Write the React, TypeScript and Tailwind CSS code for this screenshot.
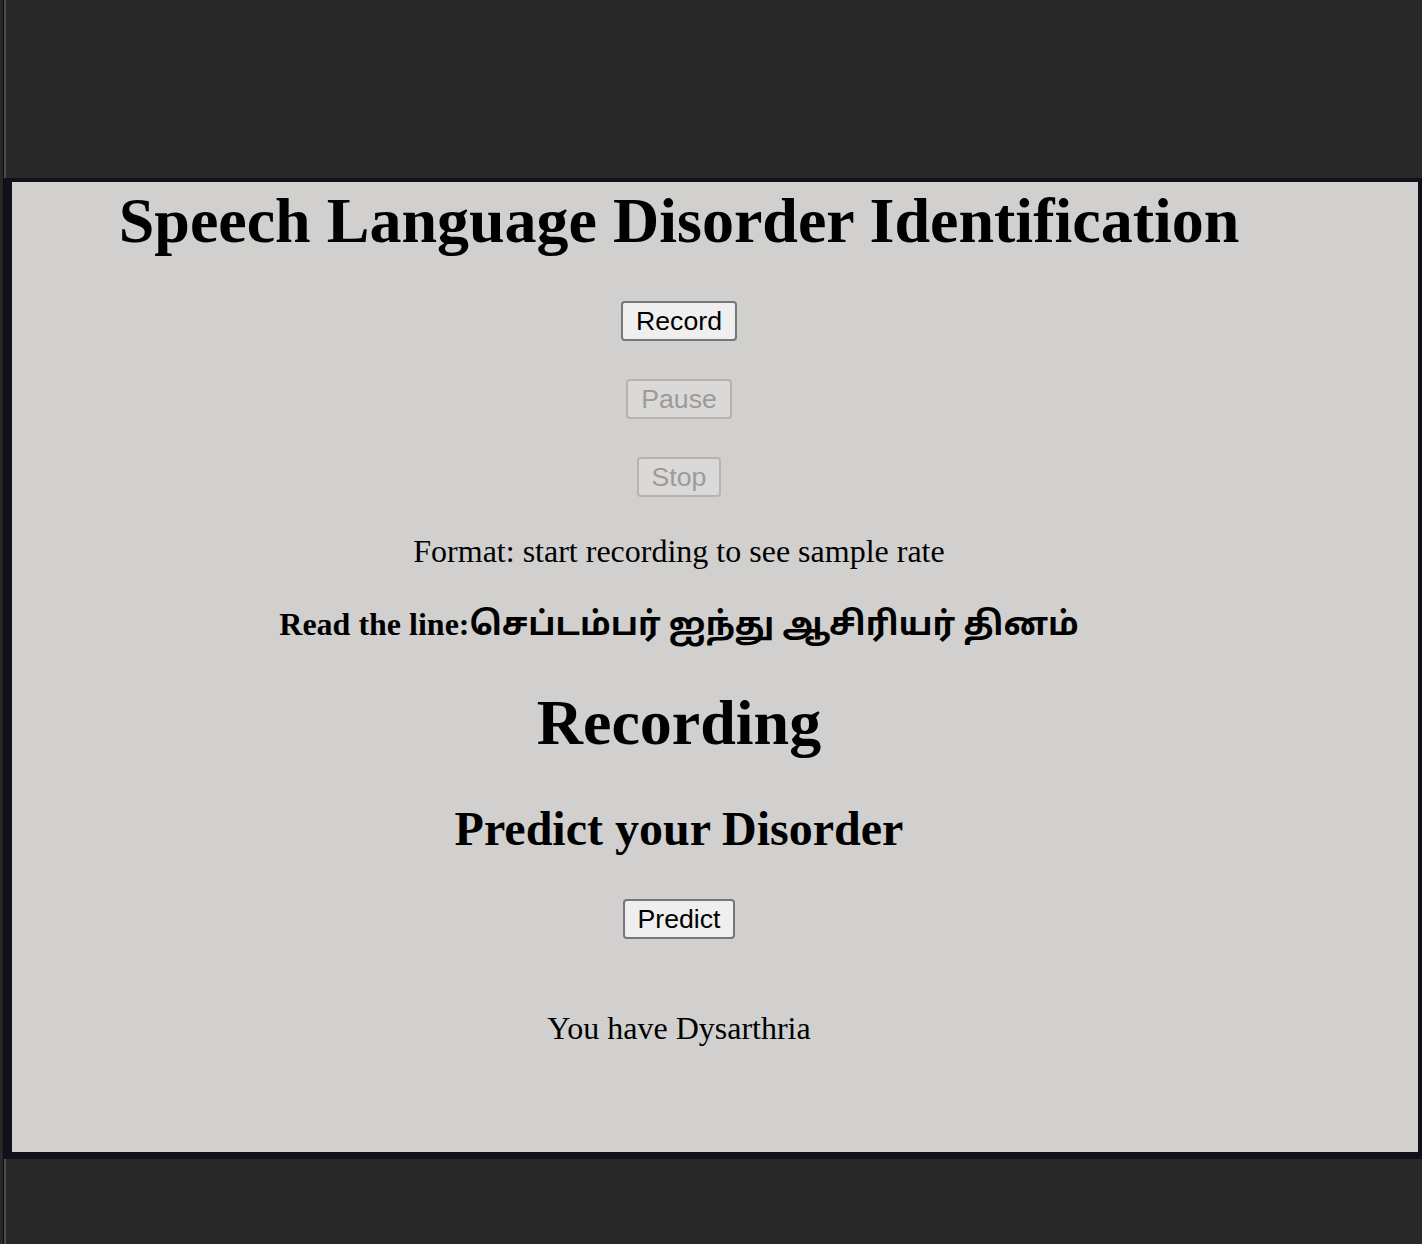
const serif = "font-['Liberation_Serif','Noto_Sans_Tamil','Noto_Sans',serif]";

const RecButton = ({ label, disabled = false }: { label: string; disabled?: boolean }) => (
  <button
    disabled={disabled}
    className={
      "h-[40px] px-[13px] rounded-[4px] border-2 text-[26.67px] leading-none font-['Liberation_Sans',Arial,sans-serif] " +
      (disabled
        ? "bg-[#dad9d7] border-[#b5b4b2] text-[#9c9b9a]"
        : "bg-[#efefef] border-[#767676] text-black")
    }
  >
    {label}
  </button>
);

const App = () => {
  return (
    <div className="flex min-h-[1244px] bg-[#282828]">
      <div className="w-[4px] shrink-0 border-r border-[#0b0b0b]" />
      <div className="flex-1 border-l-2 border-[#4d4d4d] pt-[178px]">
        <div className="-ml-[2px] h-[981px] border-l-[8px] border-t-[4px] border-r-[4px] border-b-[7px] border-[#0f121a] bg-[#d1d0ce]">
          <div className={"w-[1334px] flex flex-col items-center text-center text-black " + serif}>
            <h1 className="mt-[2px] text-[64px] leading-[74px] font-bold">
              Speech Language Disorder Identification
            </h1>

            <div className="mt-[43px] flex flex-col items-center gap-[38px]">
              <RecButton label="Record" />
              <RecButton label="Pause" disabled />
              <RecButton label="Stop" disabled />
            </div>

            <p className="mt-[36px] text-[32px] leading-[37px]">
              Format: start recording to see sample rate
            </p>

            <h4 className="mt-[36px] text-[32px] leading-[37px] font-bold">
              Read the line:<span className="text-[32.8px]">செப்டம்பர் ஐந்து ஆசிரியர் தினம்</span>
            </h4>

            <h1 className="mt-[43px] text-[64px] leading-[74px] font-bold">Recording</h1>

            <h2 className="mt-[41px] text-[48px] leading-[56px] font-bold">Predict your Disorder</h2>

            <div className="mt-[42px]">
              <RecButton label="Predict" />
            </div>

            <p className="mt-[71px] text-[32px] leading-[37px]">You have Dysarthria</p>
          </div>
        </div>
      </div>
    </div>
  );
};

export default App;
